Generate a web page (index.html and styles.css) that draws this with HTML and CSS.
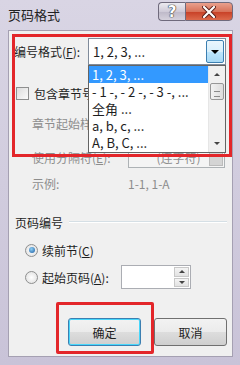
FILE: index.html
```html
<!DOCTYPE html>
<html lang="zh-CN">
<head>
    <meta charset="UTF-8">
    <title>页码格式</title>
    <link rel="stylesheet" href="styles.css">
</head>
<body>
<div class="window">
    <div class="titlebar">
        <span class="title">页码格式</span>
        <div class="caption">
            <span class="cap-btn help">?</span>
            <span class="cap-btn close">
                <svg width="14" height="12" viewBox="0 0 14 12"><path d="M2 1 L12 11 M12 1 L2 11" stroke="#5a1f1a" stroke-width="4" stroke-linecap="round"/><path d="M2 1 L12 11 M12 1 L2 11" stroke="#fff" stroke-width="2.2" stroke-linecap="round"/></svg>
            </span>
        </div>
    </div>

    <div class="client">
        <div class="row row-format">
            <span class="lbl">编号格式(<u>F</u>):</span>
            <div class="combo">
                <span class="combo-text">1, 2, 3, ...</span>
                <span class="combo-btn"><i class="tri"></i></span>
            </div>
        </div>

        <div class="row row-check">
            <span class="checkbox"></span>
            <span>包含章节号</span>
        </div>

        <div class="row row-style disabled">
            <span>章节起始样式</span>
        </div>

        <div class="row row-sep disabled">
            <span class="sub-lbl">使用分隔符(<u>E</u>):</span>
            <div class="combo combo-off">
                <span class="combo-text">(连字符)</span>
                <span class="combo-btn-off"></span>
            </div>
        </div>

        <div class="row row-sample disabled">
            <span class="sub-lbl">示例:</span>
            <span>1-1, 1-A</span>
        </div>

        <div class="row group-title">
            <span>页码编号</span>
            <span class="group-line"></span>
        </div>

        <div class="row row-radio1">
            <span class="radio checked"></span>
            <span>续前节(<u>C</u>)</span>
        </div>

        <div class="row row-radio2">
            <span class="radio"></span>
            <span class="radio-lbl">起始页码(<u>A</u>):</span>
            <div class="spin">
                <span class="spin-btns">
                    <span class="spin-btn"><i class="tri-up"></i></span>
                    <span class="spin-btn"><i class="tri-down"></i></span>
                </span>
            </div>
        </div>

        <div class="row row-buttons">
            <button class="btn btn-ok">确定</button>
            <button class="btn">取消</button>
        </div>

        <!-- açılır liste -->
        <div class="listbox">
            <div class="list-items">
                <div class="item selected">1, 2, 3, ...</div>
                <div class="item">- 1 -, - 2 -, - 3 -, ...</div>
                <div class="item">全角 ...</div>
                <div class="item">a, b, c, ...</div>
                <div class="item">A, B, C, ...</div>
            </div>
            <div class="scrollbar">
                <span class="sb-arrow"><i class="tri-up small"></i></span>
                <span class="sb-thumb"></span>
                <span class="sb-space"></span>
                <span class="sb-arrow"><i class="tri-down small"></i></span>
            </div>
        </div>

        <div class="mark mark-format"></div>
        <div class="mark mark-ok"></div>
    </div>
</div>
</body>
</html>
```

FILE: styles.css
```css
body {
    margin: 0;
    width: 240px;
    height: 365px;
    overflow: hidden;
    font-family: "Noto Sans CJK SC", "Noto Sans", sans-serif;
    font-size: 12px;
    color: #1e1e1e;
    background-color: #d3cfdd;
}

.window {
    height: 365px;
    box-sizing: border-box;
    padding: 0 7px 8px 8px;
    background: linear-gradient(to bottom, #d9d5e4, #c9c3d8);
    border-left: 1px solid #a9a3b8;
    border-right: 1px solid #a9a3b8;
    margin: 0 -1px;
}

.titlebar {
    height: 30px;
    display: flex;
    justify-content: space-between;
    align-items: flex-start;
}

.title {
    font-size: 13px;
    line-height: 30px;
    color: #222;
}

.caption {
    display: flex;
    margin-top: 2px;
}

.cap-btn {
    height: 17px;
    display: flex;
    align-items: center;
    justify-content: center;
    border: 1px solid #6f6a7c;
}

.help {
    width: 26px;
    border-radius: 4px 0 0 4px;
    border-right: none;
    background: linear-gradient(to bottom, #eceaf0, #cfcbd8 50%, #bdb8c8 51%, #d5d1dc);
    color: #fff;
    font-weight: bold;
    font-size: 15px;
    font-family: "DejaVu Sans", sans-serif;
    text-shadow: 0 0 1px #333, 0 0 1px #333, 0 0 1px #333;
}

.close {
    width: 46px;
    border-radius: 0 4px 4px 0;
    background: linear-gradient(to bottom, #e9a08d, #d8735a 50%, #c73f25 51%, #dc6a4c);
}

.client {
    position: relative;
    height: 327px;
    background-color: #f0f0f0;
    border: 1px solid #a5a0b2;
    box-sizing: border-box;
    padding-left: 5px;
}

.row {
    display: flex;
    align-items: center;
}

.row-format {
    margin-top: 7px;
    height: 27px;
}

.lbl {
    width: 74px;
}

.combo {
    width: 138px;
    height: 27px;
    box-sizing: border-box;
    background-color: #fff;
    border: 1px solid #7f8b9a;
    display: flex;
    align-items: center;
    justify-content: space-between;
    font-size: 13px;
}

.combo-text {
    padding-left: 4px;
}

.combo-btn {
    width: 18px;
    height: 23px;
    margin-right: 1px;
    box-sizing: border-box;
    border: 1px solid #3c7fb1;
    border-radius: 2px;
    background: linear-gradient(to bottom, #eaf6fd, #d9f0fc 50%, #bee6fd 51%, #a7d9f5);
    display: flex;
    align-items: center;
    justify-content: center;
}

.tri {
    width: 0;
    height: 0;
    border-left: 4px solid transparent;
    border-right: 4px solid transparent;
    border-top: 4px solid #000;
}

.row-check {
    margin-top: 20px;
    height: 16px;
    padding-left: 2px;
}

.checkbox {
    width: 11px;
    height: 11px;
    border: 1px solid #8e8f8f;
    background: linear-gradient(135deg, #dcdcdc, #fbfbfb);
    margin-right: 5px;
}

.disabled {
    color: #8d8d8d;
}

.row-style {
    margin-top: 14px;
    height: 16px;
    padding-left: 18px;
}

.row-sep {
    margin-top: 15px;
    height: 22px;
    padding-left: 18px;
}

.sub-lbl {
    width: 96px;
}

.combo-off {
    width: 97px;
    height: 22px;
    background-color: #f4f4f4;
    border-color: #adb2b5;
    justify-content: center;
    color: #8d8d8d;
    font-size: 12px;
    position: relative;
}

.combo-btn-off {
    position: absolute;
    right: 1px;
    top: 1px;
    width: 14px;
    height: 18px;
    background-color: #d4d4d4;
    border: 1px solid #bbb;
    box-sizing: border-box;
}

.row-sample {
    margin-top: 7px;
    height: 16px;
    padding-left: 18px;
}

.group-title {
    margin-top: 23px;
    height: 16px;
    padding-left: 1px;
}

.group-line {
    flex: 1;
    height: 1px;
    background-color: #d5dfe5;
    border-bottom: 1px solid #fff;
    margin: 0 5px 0 6px;
}

.row-radio1 {
    margin-top: 12px;
    height: 16px;
    padding-left: 11px;
}

.radio {
    width: 11px;
    height: 11px;
    border: 1px solid #8e8f8f;
    border-radius: 50%;
    background: radial-gradient(circle, #fff, #dcdcdc);
    margin-right: 4px;
    display: flex;
    align-items: center;
    justify-content: center;
}

.radio.checked::after {
    content: "";
    width: 6px;
    height: 6px;
    border-radius: 50%;
    background: radial-gradient(circle at 40% 35%, #8fd0f5, #1a5aa0);
}

.row-radio2 {
    margin-top: 7px;
    height: 24px;
    padding-left: 11px;
}

.radio-lbl {
    width: 79px;
}

.spin {
    width: 70px;
    height: 24px;
    box-sizing: border-box;
    background-color: #fff;
    border: 1px solid #abadb3;
    display: flex;
    justify-content: flex-end;
}

.spin-btns {
    width: 15px;
    display: flex;
    flex-direction: column;
    padding: 1px;
    gap: 1px;
}

.spin-btn {
    flex: 1;
    border: 1px solid #c8c8c8;
    background: linear-gradient(to bottom, #f4f4f4, #e2e2e2);
    display: flex;
    align-items: center;
    justify-content: center;
}

.tri-up {
    width: 0;
    height: 0;
    border-left: 3px solid transparent;
    border-right: 3px solid transparent;
    border-bottom: 3px solid #444;
}

.tri-down {
    width: 0;
    height: 0;
    border-left: 3px solid transparent;
    border-right: 3px solid transparent;
    border-top: 3px solid #444;
}

.row-buttons {
    margin-top: 29px;
    padding-left: 54px;
    gap: 13px;
}

.btn {
    width: 73px;
    height: 28px;
    font-family: "Noto Sans CJK SC", sans-serif;
    font-size: 12px;
    color: #1e1e1e;
    border: 1px solid #707070;
    border-radius: 3px;
    background: linear-gradient(to bottom, #f2f2f2, #ebebeb 50%, #dddddd 51%, #cfcfcf);
    padding: 0;
}

.btn-ok {
    border-color: #3c7fb1;
    box-shadow: inset 0 0 0 1px #48d7fb;
}

.listbox {
    position: absolute;
    left: 79px;
    top: 34px;
    width: 138px;
    height: 88px;
    box-sizing: border-box;
    background-color: #fff;
    border: 1px solid #646464;
    display: flex;
}

.list-items {
    flex: 1;
}

.item {
    height: 17px;
    line-height: 17px;
    padding-left: 3px;
    font-size: 13px;
    white-space: nowrap;
}

.item.selected {
    background-color: #3399ff;
    color: #fff;
}

.scrollbar {
    width: 16px;
    display: flex;
    flex-direction: column;
    background-color: #f0f0f0;
    border-left: 1px solid #e6e6e6;
}

.sb-arrow {
    height: 17px;
    display: flex;
    align-items: center;
    justify-content: center;
}

.small {
    border-width: 3px;
}

.sb-thumb {
    height: 15px;
    margin: 0 1px;
    border: 1px solid #979797;
    border-radius: 2px;
    background-image: repeating-linear-gradient(to bottom, transparent 0, transparent 4px, #8a8a8a 4px, #8a8a8a 5px), linear-gradient(to right, #f2f2f2, #dcdcdc);
    background-size: 6px 11px, 100% 100%;
    background-position: center 3px, 0 0;
    background-repeat: no-repeat;
}

.sb-space {
    flex: 1;
}

.mark {
    position: absolute;
    border: 3px solid #e3262a;
    box-sizing: border-box;
}

.mark-format {
    left: 3px;
    top: 3px;
    width: 220px;
    height: 123px;
}

.mark-ok {
    left: 47px;
    top: 271px;
    width: 98px;
    height: 52px;
    border-radius: 2px;
}
```
